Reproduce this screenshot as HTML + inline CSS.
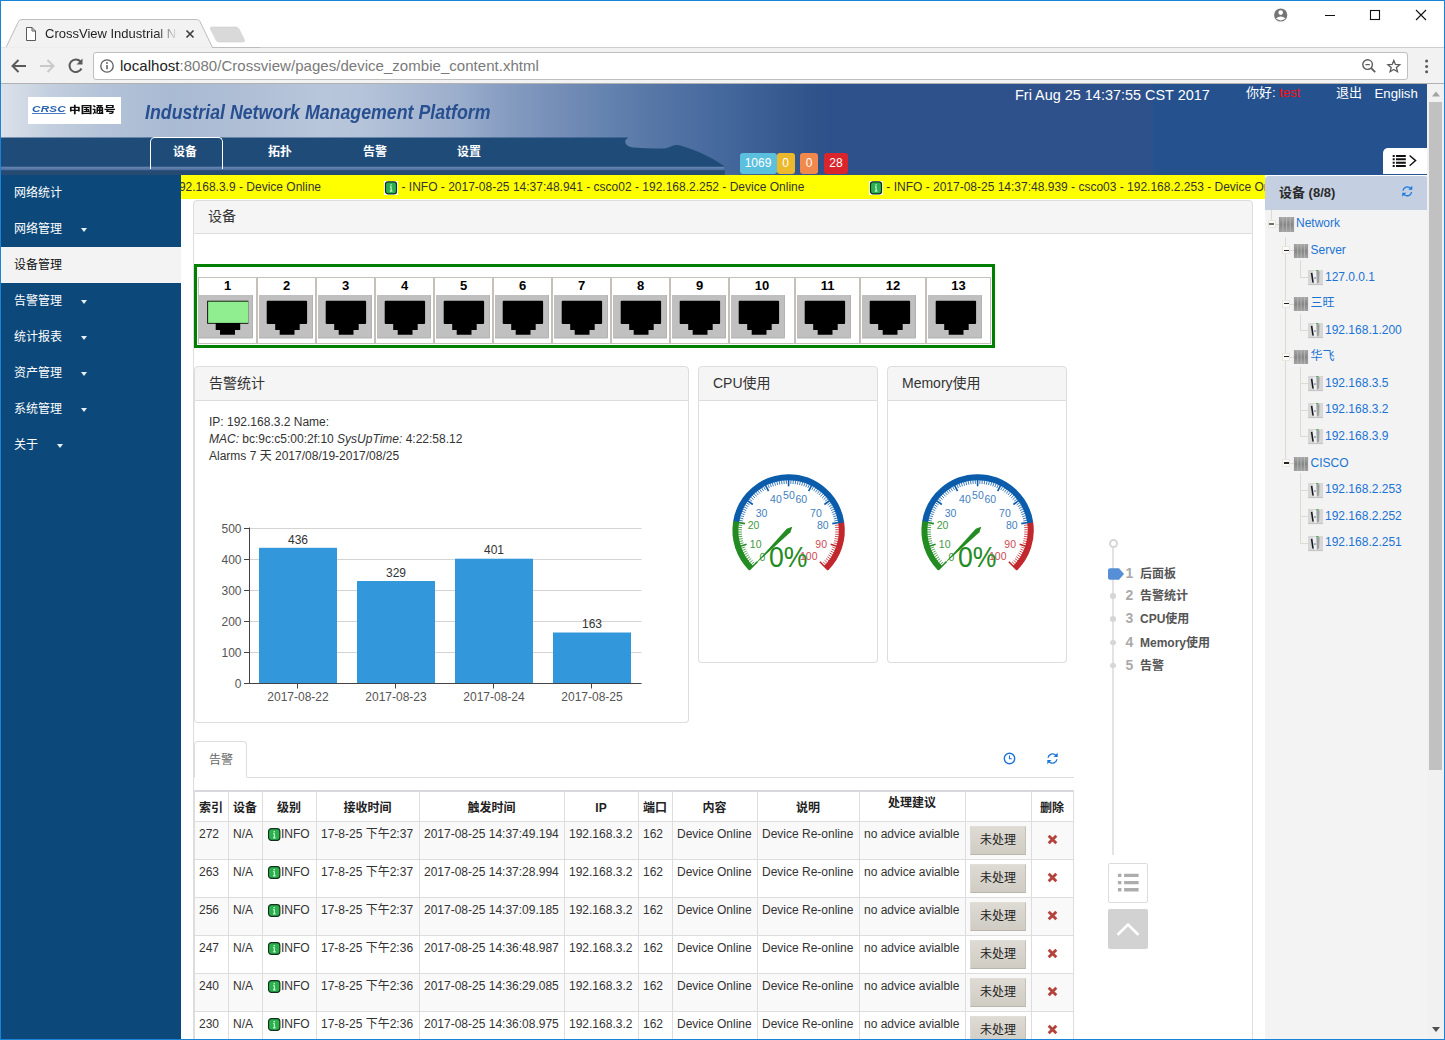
<!DOCTYPE html><html><head><meta charset="utf-8"><title>CrossView Industrial Network</title><style>
*{box-sizing:border-box;margin:0;padding:0}
html,body{width:1445px;height:1040px;overflow:hidden;background:#fff}
body{font-family:"Liberation Sans","Noto Sans CJK SC",sans-serif;font-size:12px;color:#333;position:relative}
.a{position:absolute}
.t{position:absolute;white-space:nowrap;line-height:1}
.cj{font-family:"Liberation Sans","Noto Sans CJK SC",sans-serif}
svg{position:absolute;overflow:visible}
#win{position:absolute;left:0;top:0;width:1445px;height:1040px;overflow:hidden}
.ph{position:absolute;background:#f5f5f5;border:1px solid #ddd;border-radius:4px 4px 0 0}
.pb{position:absolute;background:#fff;border:1px solid #ddd;border-top:none;border-radius:0 0 4px 4px}
.sb{position:absolute;left:1px;width:180px;height:36px;color:#fff;font-size:12px;line-height:36.6px;padding-left:13px;white-space:nowrap}
.car{position:absolute;width:0;height:0;border-left:3.5px solid transparent;border-right:3.5px solid transparent;border-top:4px solid #e8eef5}
.th{position:absolute;font-weight:bold;font-size:12px;text-align:center;white-space:nowrap;line-height:1;color:#222}
.td{position:absolute;font-size:12px;white-space:nowrap;line-height:1;color:#333}
.vl{position:absolute;width:1px;background:#ddd}
.hl{position:absolute;height:1px;background:#ddd}
.btn{position:absolute;width:56px;height:29px;background:linear-gradient(#dedbd4,#d0ccc4);border:1px solid;border-color:#e2dfd9 #c4c0b8 #bab6ae #dcd9d2;font-size:12px;line-height:26px;text-align:center;color:#222}
.tn{position:absolute;font-size:12px;color:#1a74d4;white-space:nowrap;line-height:1}
</style></head><body><div id="win">
<div class="a" style="left:0;top:0;width:1445px;height:47px;background:#fff"></div>
<div class="a" style="left:0;top:47px;width:1445px;height:37px;background:#f2f2f2;border-top:1px solid #cdcdcd;border-bottom:1px solid #b2b2b2"></div>
<svg style="left:0;top:0" width="260" height="48" viewBox="0 0 260 48"><path d="M1 47.5 L6 47.5 L18.5 21.5 Q19.5 19.5 22 19.5 L196.5 19.5 Q199 19.5 200 21.5 L212.5 47.5 L260 47.5" fill="#f2f2f2" stroke="#bdbdbd" stroke-width="1"/><path d="M1 48 L6.5 48 L212 48" stroke="#f2f2f2" stroke-width="1.4" fill="none"/><path d="M211.5 27 L236 27 Q238 27 239 29 L244.5 40 Q245 42 243 42 L219 42 Q217 42 216 40 L210.5 29 Q210 27 211.5 27Z" fill="#d9d9d9" stroke="#cfcfcf" stroke-width="0.6"/><path d="M26.5 27.5 L32 27.5 L35.5 31 L35.5 40.5 L26.5 40.5 Z M32 27.5 L32 31 L35.5 31" fill="#fff" stroke="#5a5a5a" stroke-width="1"/><path d="M186.5 30.5 L193.5 37.5 M193.5 30.5 L186.5 37.5" stroke="#3c3c3c" stroke-width="1.6" fill="none"/></svg>
<div class="t" style="left:45px;top:26.5px;font-size:13px;color:#1f1f1f;width:133px;overflow:hidden;-webkit-mask-image:linear-gradient(90deg,#000 84%,transparent 100%);mask-image:linear-gradient(90deg,#000 84%,transparent 100%)">CrossView Industrial Network</div>
<svg style="left:1260px;top:0" width="185" height="47" viewBox="0 0 185 47"><circle cx="20.7" cy="15" r="6.6" fill="#767676"/><circle cx="20.7" cy="12.6" r="2.3" fill="#fff"/><path d="M15.9 18.6 Q20.7 14.6 25.5 18.6 Q20.7 22.2 15.9 18.6Z" fill="#fff"/><path d="M65 15.5 H75" stroke="#111" stroke-width="1"/><rect x="110.5" y="10.5" width="9" height="9" fill="none" stroke="#111" stroke-width="1.1"/><path d="M156 10 L166 20 M166 10 L156 20" stroke="#111" stroke-width="1.1"/></svg>
<svg style="left:0;top:48px" width="130" height="36" viewBox="0 0 130 36"><path d="M26 18 H13 M18.5 12 L12.5 18 L18.5 24" fill="none" stroke="#5a5a5a" stroke-width="2"/><path d="M40 18 H53 M47.5 12 L53.5 18 L47.5 24" fill="none" stroke="#c9c9c9" stroke-width="2"/><path d="M80.5 13.5 A6.3 6.3 0 1 0 81.5 20.5" fill="none" stroke="#5a5a5a" stroke-width="2"/><path d="M76.5 16.5 H82.5 V10.5 Z" fill="#5a5a5a"/></svg>
<div class="a" style="left:93px;top:52px;width:1315px;height:28px;background:#fff;border:1px solid #bfbfbf;border-radius:3px"></div>
<svg style="left:100px;top:59px" width="14" height="14" viewBox="0 0 14 14"><circle cx="7" cy="7" r="6.2" fill="none" stroke="#5a5a5a" stroke-width="1.3"/><path d="M7 6 V10.2" stroke="#5a5a5a" stroke-width="1.5"/><circle cx="7" cy="4" r="0.9" fill="#5a5a5a"/></svg>
<div class="t" style="left:120px;top:58px;font-size:15px;color:#222;letter-spacing:0.035px">localhost<span style="color:#7a7a7a">:8080/Crossview/pages/device_zombie_content.xhtml</span></div>
<svg style="left:1360px;top:57px" width="60" height="18" viewBox="0 0 60 18"><circle cx="7.6" cy="7.6" r="4.8" fill="none" stroke="#5a5a5a" stroke-width="1.4"/><path d="M11.2 11.2 L15.2 15.2" stroke="#5a5a5a" stroke-width="1.8"/><path d="M5.4 7.6 H9.8" stroke="#5a5a5a" stroke-width="1.2"/><path d="M33.8 3.4 L35.4 7.4 L39.7 7.7 L36.4 10.5 L37.5 14.7 L33.8 12.4 L30.1 14.7 L31.2 10.5 L27.9 7.7 L32.2 7.4 Z" fill="none" stroke="#5a5a5a" stroke-width="1.3" stroke-linejoin="miter"/></svg>
<svg style="left:1423px;top:58px" width="8" height="18" viewBox="0 0 8 18"><circle cx="3.6" cy="2.9" r="1.5" fill="#5a5a5a"/><circle cx="3.6" cy="8.4" r="1.5" fill="#5a5a5a"/><circle cx="3.6" cy="13.8" r="1.5" fill="#5a5a5a"/></svg>
<div class="a" style="left:1px;top:84px;width:1443px;height:91px;background:linear-gradient(90deg,#dbe1ea 0px,#cfd8e4 25px,#c3cfde 50px,#b4c3d8 100px,#a9bad3 170px,#b0bfd6 250px,#b8c6db 320px,#b5c4d9 360px,#a6b6d1 420px,#9aadcb 460px,#889ec2 500px,#7790b8 550px,#6684b0 600px,#5777a7 650px,#4a6ca0 700px,#3e6298 750px,#35598f 790px,#30538c 810px,#2f518b 830px,#2f518b 1152px,#25528e 1152px,#25528e 1445px)"></div>
<svg style="left:0;top:137px" width="740" height="38" viewBox="0 0 740 38"><defs><linearGradient id="st" x1="0" y1="0" x2="0" y2="1"><stop offset="0" stop-color="#6a88b3"/><stop offset="1" stop-color="#47699a"/></linearGradient></defs><path d="M0 0.6 H628.3 Q624.6 3 625.4 5.8 Q627 10 633 10.6 Q650 12 665 11.4 Q670 10.4 674 8.3 Q677.5 7.6 682 9 Q700 14.6 712 21.6 Q720 26.2 724.5 29.5 V38 H0 Z" fill="#1e4b78"/><path d="M0 29.8 H724.5 V33.6 H0Z" fill="url(#st)"/><path d="M0 33.6 H724.5 V38 H0Z" fill="#264a72"/></svg>
<div class="a" style="left:28px;top:97px;width:93px;height:27px;background:#fff"></div>
<div class="t" style="left:32.3px;top:105px;font-size:8.3px;font-weight:bold;font-style:italic;color:#2a62b0;letter-spacing:0.2px;transform:scaleX(1.4);transform-origin:0 0;border-bottom:1px solid #4a7dc0;padding-bottom:0px;height:9px">CRSC</div>
<div class="t cj" style="left:68.8px;top:105.1px;font-size:11px;font-weight:900;color:#111;letter-spacing:0px;transform:scale(1.06,0.8);transform-origin:0 0;font-family:'Noto Sans CJK SC',sans-serif">中国通号</div>
<div class="t" style="left:145px;top:100.6px;font-size:21px;font-weight:bold;font-style:italic;color:#284f90;transform:scaleX(0.846);transform-origin:0 0">Industrial Network Management Platform</div>
<div class="a" style="left:150px;top:137px;width:73px;height:32px;border:1px solid #fff;border-bottom:none;border-radius:5px 5px 0 0"></div>
<div class="t cj" style="left:173px;top:146px;font-size:12px;font-weight:bold;color:#fff">设备</div>
<div class="t cj" style="left:268px;top:146px;font-size:12px;font-weight:bold;color:#fff">拓扑</div>
<div class="t cj" style="left:363px;top:146px;font-size:12px;font-weight:bold;color:#fff">告警</div>
<div class="t cj" style="left:457px;top:146px;font-size:12px;font-weight:bold;color:#fff">设置</div>
<div class="a" style="left:739.5px;top:153px;width:37px;height:21px;background:#5bc0de;border-radius:3px;color:#fff;font-size:12px;text-align:center;line-height:21px">1069</div>
<div class="a" style="left:776.5px;top:153px;width:18px;height:21px;background:#ecb92d;border-radius:3px;color:#fff;font-size:12px;text-align:center;line-height:21px">0</div>
<div class="a" style="left:800px;top:153px;width:18px;height:21px;background:#f0894b;border-radius:3px;color:#fff;font-size:12px;text-align:center;line-height:21px">0</div>
<div class="a" style="left:824px;top:153px;width:24px;height:21px;background:#d9262c;border-radius:3px;color:#fff;font-size:12px;text-align:center;line-height:21px">28</div>
<div class="t" style="left:1015px;top:87.5px;font-size:14.45px;color:#fff">Fri Aug 25 14:37:55 CST 2017</div>
<div class="t cj" style="left:1246px;top:85.5px;font-size:13px;color:#fff">你好: <span style="color:#ff0a0a">test</span></div>
<div class="t cj" style="left:1336px;top:85.5px;font-size:13px;color:#fff">退出</div>
<div class="t" style="left:1374.5px;top:86.6px;font-size:13.2px;color:#fff">English</div>
<div class="a" style="left:1383px;top:148px;width:45px;height:26px;background:#fff;border-radius:5px 0 0 0"></div>
<svg style="left:1392px;top:153px" width="28" height="16" viewBox="0 0 28 16"><path d="M0.7 3 H2.7 M0.7 6.3 H2.7 M0.7 9.7 H2.7 M0.7 13 H2.7" stroke="#111" stroke-width="2"/><path d="M4 3 H13.8 M4 6.3 H13.8 M4 9.7 H13.8 M4 13 H13.8" stroke="#111" stroke-width="2"/><path d="M17.6 2.5 L23.6 7.6 L17.6 12.7" fill="none" stroke="#111" stroke-width="1.4"/></svg>
<div class="a" style="left:1px;top:175px;width:180px;height:865px;background:#0c497a"></div>
<div class="sb cj" style="top:175px;">网络统计</div>
<div class="sb cj" style="top:211px;">网络管理</div>
<div class="car" style="left:81px;top:228px"></div>
<div class="sb cj" style="top:247px;background:#f3f3f3;color:#111;">设备管理</div>
<div class="sb cj" style="top:283px;">告警管理</div>
<div class="car" style="left:81px;top:300px"></div>
<div class="sb cj" style="top:319px;">统计报表</div>
<div class="car" style="left:81px;top:336px"></div>
<div class="sb cj" style="top:355px;">资产管理</div>
<div class="car" style="left:81px;top:372px"></div>
<div class="sb cj" style="top:391px;">系统管理</div>
<div class="car" style="left:81px;top:408px"></div>
<div class="sb cj" style="top:427px;">关于</div>
<div class="car" style="left:57px;top:444px"></div>
<div class="a" style="left:181px;top:175px;width:1084px;height:24px;background:#ffff00;overflow:hidden">
<div class="t" style="right:944px;top:6px;font-size:12px;color:#333">- INFO - 2017-08-25 14:37:48.944 - csco01 - 192.168.3.9 - Device Online</div>
<svg style="left:203px;top:6px" width="14" height="14" viewBox="0 0 14 14"><rect x="0" y="0" width="14" height="14" fill="#fff"/><rect x="1.5" y="0.9" width="11" height="12" rx="2.6" fill="#2bb050" stroke="#12301b" stroke-width="1.2"/><path d="M7.1 5.6 V10 M6 5.8 H7.1 M5.8 10.1 H8.5" stroke="#e9ffe6" stroke-width="1" fill="none"/><rect x="6.45" y="3.2" width="1.2" height="1.3" fill="#e9ffe6"/></svg>
<div class="t" style="left:220.5px;top:6px;font-size:12px;color:#333">- INFO - 2017-08-25 14:37:48.941 - csco02 - 192.168.2.252 - Device Online</div>
<svg style="left:688px;top:6px" width="14" height="14" viewBox="0 0 14 14"><rect x="0" y="0" width="14" height="14" fill="#fff"/><rect x="1.5" y="0.9" width="11" height="12" rx="2.6" fill="#2bb050" stroke="#12301b" stroke-width="1.2"/><path d="M7.1 5.6 V10 M6 5.8 H7.1 M5.8 10.1 H8.5" stroke="#e9ffe6" stroke-width="1" fill="none"/><rect x="6.45" y="3.2" width="1.2" height="1.3" fill="#e9ffe6"/></svg>
<div class="t" style="left:705.3px;top:6px;font-size:12px;color:#333">- INFO - 2017-08-25 14:37:48.939 - csco03 - 192.168.2.253 - Device Online</div>
</div>
<div class="ph" style="left:193px;top:200px;width:1060px;height:34px;border-radius:4px 4px 0 0"></div>
<div class="a" style="left:193px;top:234px;width:1060px;height:810px;border-left:1px solid #ddd;border-right:1px solid #ddd"></div>
<div class="t cj" style="left:208px;top:209px;font-size:14px;color:#333">设备</div>
<div class="a" style="left:194px;top:264px;width:801px;height:84px;border:3px solid #008000;background:#fff"></div>
<div class="a" style="left:198px;top:277px;width:59px;height:67px;border:1px solid #c5c0ba;background:#fff"></div>
<div class="t" style="left:198px;top:279.2px;width:59px;text-align:center;font-size:13px;font-weight:bold;color:#000">1</div>
<svg style="left:199px;top:295.2px" width="54" height="43.3" viewBox="0 0 54 43.3"><rect width="54" height="43.3" fill="#c0c0c0"/><path d="M53.5 0 V42.8 H0" fill="none" stroke="#b4b4b4" stroke-width="1"/><path d="M8.2 5.8 H49.4 V28.7 H41.2 V35 H36 V39.7 H21 V35 H16.7 V28.7 H8.2Z" fill="#000"/><rect x="9.1" y="6.6" width="40.3" height="21.3" fill="#90ee90"/></svg>
<div class="a" style="left:257px;top:277px;width:59px;height:67px;border:1px solid #c5c0ba;background:#fff"></div>
<div class="t" style="left:257px;top:279.2px;width:59px;text-align:center;font-size:13px;font-weight:bold;color:#000">2</div>
<svg style="left:259px;top:295.2px" width="54" height="43.3" viewBox="0 0 54 43.3"><rect width="54" height="43.3" fill="#c0c0c0"/><path d="M53.5 0 V42.8 H0" fill="none" stroke="#b4b4b4" stroke-width="1"/><path d="M8.7 5.8 H47.1 Q48.1 5.8 48.1 6.8 V27.9 Q48.1 28.9 47.1 28.9 H40.7 V35 H35.5 V39.7 H20.7 V35 H16.2 V28.9 H8.7 Q7.7 28.9 7.7 27.9 V6.8 Q7.7 5.8 8.7 5.8Z" fill="#000"/></svg>
<div class="a" style="left:316px;top:277px;width:59px;height:67px;border:1px solid #c5c0ba;background:#fff"></div>
<div class="t" style="left:316px;top:279.2px;width:59px;text-align:center;font-size:13px;font-weight:bold;color:#000">3</div>
<svg style="left:318px;top:295.2px" width="54" height="43.3" viewBox="0 0 54 43.3"><rect width="54" height="43.3" fill="#c0c0c0"/><path d="M53.5 0 V42.8 H0" fill="none" stroke="#b4b4b4" stroke-width="1"/><path d="M8.7 5.8 H47.1 Q48.1 5.8 48.1 6.8 V27.9 Q48.1 28.9 47.1 28.9 H40.7 V35 H35.5 V39.7 H20.7 V35 H16.2 V28.9 H8.7 Q7.7 28.9 7.7 27.9 V6.8 Q7.7 5.8 8.7 5.8Z" fill="#000"/></svg>
<div class="a" style="left:375px;top:277px;width:59px;height:67px;border:1px solid #c5c0ba;background:#fff"></div>
<div class="t" style="left:375px;top:279.2px;width:59px;text-align:center;font-size:13px;font-weight:bold;color:#000">4</div>
<svg style="left:377px;top:295.2px" width="54" height="43.3" viewBox="0 0 54 43.3"><rect width="54" height="43.3" fill="#c0c0c0"/><path d="M53.5 0 V42.8 H0" fill="none" stroke="#b4b4b4" stroke-width="1"/><path d="M8.7 5.8 H47.1 Q48.1 5.8 48.1 6.8 V27.9 Q48.1 28.9 47.1 28.9 H40.7 V35 H35.5 V39.7 H20.7 V35 H16.2 V28.9 H8.7 Q7.7 28.9 7.7 27.9 V6.8 Q7.7 5.8 8.7 5.8Z" fill="#000"/></svg>
<div class="a" style="left:434px;top:277px;width:59px;height:67px;border:1px solid #c5c0ba;background:#fff"></div>
<div class="t" style="left:434px;top:279.2px;width:59px;text-align:center;font-size:13px;font-weight:bold;color:#000">5</div>
<svg style="left:436px;top:295.2px" width="54" height="43.3" viewBox="0 0 54 43.3"><rect width="54" height="43.3" fill="#c0c0c0"/><path d="M53.5 0 V42.8 H0" fill="none" stroke="#b4b4b4" stroke-width="1"/><path d="M8.7 5.8 H47.1 Q48.1 5.8 48.1 6.8 V27.9 Q48.1 28.9 47.1 28.9 H40.7 V35 H35.5 V39.7 H20.7 V35 H16.2 V28.9 H8.7 Q7.7 28.9 7.7 27.9 V6.8 Q7.7 5.8 8.7 5.8Z" fill="#000"/></svg>
<div class="a" style="left:493px;top:277px;width:59px;height:67px;border:1px solid #c5c0ba;background:#fff"></div>
<div class="t" style="left:493px;top:279.2px;width:59px;text-align:center;font-size:13px;font-weight:bold;color:#000">6</div>
<svg style="left:495px;top:295.2px" width="54" height="43.3" viewBox="0 0 54 43.3"><rect width="54" height="43.3" fill="#c0c0c0"/><path d="M53.5 0 V42.8 H0" fill="none" stroke="#b4b4b4" stroke-width="1"/><path d="M8.7 5.8 H47.1 Q48.1 5.8 48.1 6.8 V27.9 Q48.1 28.9 47.1 28.9 H40.7 V35 H35.5 V39.7 H20.7 V35 H16.2 V28.9 H8.7 Q7.7 28.9 7.7 27.9 V6.8 Q7.7 5.8 8.7 5.8Z" fill="#000"/></svg>
<div class="a" style="left:552px;top:277px;width:59px;height:67px;border:1px solid #c5c0ba;background:#fff"></div>
<div class="t" style="left:552px;top:279.2px;width:59px;text-align:center;font-size:13px;font-weight:bold;color:#000">7</div>
<svg style="left:554px;top:295.2px" width="54" height="43.3" viewBox="0 0 54 43.3"><rect width="54" height="43.3" fill="#c0c0c0"/><path d="M53.5 0 V42.8 H0" fill="none" stroke="#b4b4b4" stroke-width="1"/><path d="M8.7 5.8 H47.1 Q48.1 5.8 48.1 6.8 V27.9 Q48.1 28.9 47.1 28.9 H40.7 V35 H35.5 V39.7 H20.7 V35 H16.2 V28.9 H8.7 Q7.7 28.9 7.7 27.9 V6.8 Q7.7 5.8 8.7 5.8Z" fill="#000"/></svg>
<div class="a" style="left:611px;top:277px;width:59px;height:67px;border:1px solid #c5c0ba;background:#fff"></div>
<div class="t" style="left:611px;top:279.2px;width:59px;text-align:center;font-size:13px;font-weight:bold;color:#000">8</div>
<svg style="left:613px;top:295.2px" width="54" height="43.3" viewBox="0 0 54 43.3"><rect width="54" height="43.3" fill="#c0c0c0"/><path d="M53.5 0 V42.8 H0" fill="none" stroke="#b4b4b4" stroke-width="1"/><path d="M8.7 5.8 H47.1 Q48.1 5.8 48.1 6.8 V27.9 Q48.1 28.9 47.1 28.9 H40.7 V35 H35.5 V39.7 H20.7 V35 H16.2 V28.9 H8.7 Q7.7 28.9 7.7 27.9 V6.8 Q7.7 5.8 8.7 5.8Z" fill="#000"/></svg>
<div class="a" style="left:670px;top:277px;width:59px;height:67px;border:1px solid #c5c0ba;background:#fff"></div>
<div class="t" style="left:670px;top:279.2px;width:59px;text-align:center;font-size:13px;font-weight:bold;color:#000">9</div>
<svg style="left:672px;top:295.2px" width="54" height="43.3" viewBox="0 0 54 43.3"><rect width="54" height="43.3" fill="#c0c0c0"/><path d="M53.5 0 V42.8 H0" fill="none" stroke="#b4b4b4" stroke-width="1"/><path d="M8.7 5.8 H47.1 Q48.1 5.8 48.1 6.8 V27.9 Q48.1 28.9 47.1 28.9 H40.7 V35 H35.5 V39.7 H20.7 V35 H16.2 V28.9 H8.7 Q7.7 28.9 7.7 27.9 V6.8 Q7.7 5.8 8.7 5.8Z" fill="#000"/></svg>
<div class="a" style="left:729px;top:277px;width:66px;height:67px;border:1px solid #c5c0ba;background:#fff"></div>
<div class="t" style="left:729px;top:279.2px;width:66px;text-align:center;font-size:13px;font-weight:bold;color:#000">10</div>
<svg style="left:731px;top:295.2px" width="54" height="43.3" viewBox="0 0 54 43.3"><rect width="54" height="43.3" fill="#c0c0c0"/><path d="M53.5 0 V42.8 H0" fill="none" stroke="#b4b4b4" stroke-width="1"/><path d="M8.7 5.8 H47.1 Q48.1 5.8 48.1 6.8 V27.9 Q48.1 28.9 47.1 28.9 H40.7 V35 H35.5 V39.7 H20.7 V35 H16.2 V28.9 H8.7 Q7.7 28.9 7.7 27.9 V6.8 Q7.7 5.8 8.7 5.8Z" fill="#000"/></svg>
<div class="a" style="left:795px;top:277px;width:65px;height:67px;border:1px solid #c5c0ba;background:#fff"></div>
<div class="t" style="left:795px;top:279.2px;width:65px;text-align:center;font-size:13px;font-weight:bold;color:#000">11</div>
<svg style="left:797px;top:295.2px" width="54" height="43.3" viewBox="0 0 54 43.3"><rect width="54" height="43.3" fill="#c0c0c0"/><path d="M53.5 0 V42.8 H0" fill="none" stroke="#b4b4b4" stroke-width="1"/><path d="M8.7 5.8 H47.1 Q48.1 5.8 48.1 6.8 V27.9 Q48.1 28.9 47.1 28.9 H40.7 V35 H35.5 V39.7 H20.7 V35 H16.2 V28.9 H8.7 Q7.7 28.9 7.7 27.9 V6.8 Q7.7 5.8 8.7 5.8Z" fill="#000"/></svg>
<div class="a" style="left:860px;top:277px;width:66px;height:67px;border:1px solid #c5c0ba;background:#fff"></div>
<div class="t" style="left:860px;top:279.2px;width:66px;text-align:center;font-size:13px;font-weight:bold;color:#000">12</div>
<svg style="left:862px;top:295.2px" width="54" height="43.3" viewBox="0 0 54 43.3"><rect width="54" height="43.3" fill="#c0c0c0"/><path d="M53.5 0 V42.8 H0" fill="none" stroke="#b4b4b4" stroke-width="1"/><path d="M8.7 5.8 H47.1 Q48.1 5.8 48.1 6.8 V27.9 Q48.1 28.9 47.1 28.9 H40.7 V35 H35.5 V39.7 H20.7 V35 H16.2 V28.9 H8.7 Q7.7 28.9 7.7 27.9 V6.8 Q7.7 5.8 8.7 5.8Z" fill="#000"/></svg>
<div class="a" style="left:926px;top:277px;width:65px;height:67px;border:1px solid #c5c0ba;background:#fff"></div>
<div class="t" style="left:926px;top:279.2px;width:65px;text-align:center;font-size:13px;font-weight:bold;color:#000">13</div>
<svg style="left:928px;top:295.2px" width="54" height="43.3" viewBox="0 0 54 43.3"><rect width="54" height="43.3" fill="#c0c0c0"/><path d="M53.5 0 V42.8 H0" fill="none" stroke="#b4b4b4" stroke-width="1"/><path d="M8.7 5.8 H47.1 Q48.1 5.8 48.1 6.8 V27.9 Q48.1 28.9 47.1 28.9 H40.7 V35 H35.5 V39.7 H20.7 V35 H16.2 V28.9 H8.7 Q7.7 28.9 7.7 27.9 V6.8 Q7.7 5.8 8.7 5.8Z" fill="#000"/></svg>
<div class="ph" style="left:194px;top:366px;width:495px;height:35px"></div>
<div class="pb" style="left:194px;top:401px;width:495px;height:322px"></div>
<div class="t cj" style="left:209px;top:376px;font-size:14px;color:#333">告警统计</div>
<div class="ph" style="left:698px;top:366px;width:180px;height:35px"></div>
<div class="pb" style="left:698px;top:401px;width:180px;height:262px"></div>
<div class="t cj" style="left:713px;top:376px;font-size:14px;color:#333">CPU使用</div>
<div class="ph" style="left:887px;top:366px;width:180px;height:35px"></div>
<div class="pb" style="left:887px;top:401px;width:180px;height:262px"></div>
<div class="t cj" style="left:902px;top:376px;font-size:14px;color:#333">Memory使用</div>
<div class="t" style="left:209px;top:416px;font-size:12px;color:#333">IP: 192.168.3.2 Name:</div>
<div class="t" style="left:209px;top:433px;font-size:12px;color:#333"><i>MAC:</i> bc:9c:c5:00:2f:10 <i>SysUpTime:</i> 4:22:58.12</div>
<div class="t cj" style="left:209px;top:450px;font-size:12px;color:#333">Alarms 7 天 2017/08/19-2017/08/25</div>
<svg style="left:0;top:0" width="700" height="730" viewBox="0 0 700 730" font-family="Liberation Sans, sans-serif" font-size="12"><path d="M249.5 652.5 H641.5" stroke="#d4d4d4" stroke-width="1"/><path d="M249.5 621.5 H641.5" stroke="#d4d4d4" stroke-width="1"/><path d="M249.5 590.5 H641.5" stroke="#d4d4d4" stroke-width="1"/><path d="M249.5 559.5 H641.5" stroke="#d4d4d4" stroke-width="1"/><path d="M249.5 528.5 H641.5" stroke="#d4d4d4" stroke-width="1"/><rect x="259" y="547.8" width="78" height="135.2" fill="#3398db"/><text x="298" y="543.5" text-anchor="middle" fill="#333">436</text><text x="298" y="700.5" text-anchor="middle" fill="#555">2017-08-22</text><path d="M297.5 683 V688.5" stroke="#444" stroke-width="1"/><rect x="357" y="581.0" width="78" height="102.0" fill="#3398db"/><text x="396" y="576.7" text-anchor="middle" fill="#333">329</text><text x="396" y="700.5" text-anchor="middle" fill="#555">2017-08-23</text><path d="M395.5 683 V688.5" stroke="#444" stroke-width="1"/><rect x="455" y="558.7" width="78" height="124.3" fill="#3398db"/><text x="494" y="554.4" text-anchor="middle" fill="#333">401</text><text x="494" y="700.5" text-anchor="middle" fill="#555">2017-08-24</text><path d="M493.5 683 V688.5" stroke="#444" stroke-width="1"/><rect x="553" y="632.5" width="78" height="50.5" fill="#3398db"/><text x="592" y="628.2" text-anchor="middle" fill="#333">163</text><text x="592" y="700.5" text-anchor="middle" fill="#555">2017-08-25</text><path d="M591.5 683 V688.5" stroke="#444" stroke-width="1"/><path d="M249.5 527.5 V683.5 M244 683.5 H641.5" stroke="#444" stroke-width="1" fill="none"/><path d="M244 683.5 H249.5" stroke="#444" stroke-width="1"/><text x="241.5" y="687.5" text-anchor="end" fill="#555">0</text><path d="M244 652.5 H249.5" stroke="#444" stroke-width="1"/><text x="241.5" y="656.5" text-anchor="end" fill="#555">100</text><path d="M244 621.5 H249.5" stroke="#444" stroke-width="1"/><text x="241.5" y="625.5" text-anchor="end" fill="#555">200</text><path d="M244 590.5 H249.5" stroke="#444" stroke-width="1"/><text x="241.5" y="594.5" text-anchor="end" fill="#555">300</text><path d="M244 559.5 H249.5" stroke="#444" stroke-width="1"/><text x="241.5" y="563.5" text-anchor="end" fill="#555">400</text><path d="M244 528.5 H249.5" stroke="#444" stroke-width="1"/><text x="241.5" y="532.5" text-anchor="end" fill="#555">500</text></svg>
<svg style="left:0;top:0" width="1100" height="700" viewBox="0 0 1100 700" font-family="Liberation Sans, sans-serif"><path d="M750.98 568.12 A53.20 53.20 0 0 1 736.05 522.18" fill="none" stroke="#228b22" stroke-width="6.0"/><path d="M736.05 522.18 A53.20 53.20 0 0 1 841.15 522.18" fill="none" stroke="#0b5cab" stroke-width="6.0"/><path d="M841.15 522.18 A53.20 53.20 0 0 1 826.22 568.12" fill="none" stroke="#c1272d" stroke-width="6.0"/><path d="M749.21 569.89 L757.35 561.75" stroke="#228b22" stroke-width="1.6"/><path d="M751.10 564.62 L754.06 561.93" stroke="#228b22" stroke-width="0.8"/><path d="M749.53 562.82 L752.62 560.27" stroke="#228b22" stroke-width="0.8"/><path d="M748.06 560.94 L751.25 558.54" stroke="#228b22" stroke-width="0.8"/><path d="M746.67 559.00 L749.98 556.75" stroke="#228b22" stroke-width="0.8"/><path d="M745.37 556.99 L748.78 554.90" stroke="#228b22" stroke-width="0.8"/><path d="M744.17 554.92 L747.68 553.00" stroke="#228b22" stroke-width="0.8"/><path d="M743.07 552.80 L746.66 551.05" stroke="#228b22" stroke-width="0.8"/><path d="M742.07 550.64 L745.74 549.05" stroke="#228b22" stroke-width="0.8"/><path d="M741.17 548.42 L744.91 547.01" stroke="#228b22" stroke-width="0.8"/><path d="M735.63 547.71 L746.56 544.16" stroke="#228b22" stroke-width="1.6"/><path d="M739.70 543.88 L743.56 542.82" stroke="#228b22" stroke-width="0.8"/><path d="M739.12 541.56 L743.02 540.69" stroke="#228b22" stroke-width="0.8"/><path d="M738.65 539.22 L742.60 538.53" stroke="#228b22" stroke-width="0.8"/><path d="M738.30 536.85 L742.27 536.35" stroke="#228b22" stroke-width="0.8"/><path d="M738.06 534.48 L742.04 534.16" stroke="#228b22" stroke-width="0.8"/><path d="M737.93 532.09 L741.92 531.97" stroke="#228b22" stroke-width="0.8"/><path d="M737.91 529.70 L741.91 529.77" stroke="#228b22" stroke-width="0.8"/><path d="M738.00 527.32 L741.99 527.57" stroke="#228b22" stroke-width="0.8"/><path d="M738.21 524.94 L742.18 525.38" stroke="#228b22" stroke-width="0.8"/><path d="M733.59 521.79 L744.94 523.59" stroke="#228b22" stroke-width="1.6"/><path d="M738.95 520.22 L742.87 521.03" stroke="#0b5cab" stroke-width="0.8"/><path d="M739.49 517.89 L743.37 518.89" stroke="#0b5cab" stroke-width="0.8"/><path d="M740.14 515.59 L743.96 516.77" stroke="#0b5cab" stroke-width="0.8"/><path d="M740.90 513.33 L744.66 514.68" stroke="#0b5cab" stroke-width="0.8"/><path d="M741.76 511.10 L745.45 512.63" stroke="#0b5cab" stroke-width="0.8"/><path d="M742.73 508.91 L746.34 510.62" stroke="#0b5cab" stroke-width="0.8"/><path d="M743.79 506.78 L747.33 508.65" stroke="#0b5cab" stroke-width="0.8"/><path d="M744.96 504.69 L748.40 506.73" stroke="#0b5cab" stroke-width="0.8"/><path d="M746.22 502.66 L749.57 504.86" stroke="#0b5cab" stroke-width="0.8"/><path d="M743.54 497.76 L752.84 504.52" stroke="#0b5cab" stroke-width="1.6"/><path d="M749.03 498.80 L752.15 501.30" stroke="#0b5cab" stroke-width="0.8"/><path d="M750.57 496.97 L753.57 499.62" stroke="#0b5cab" stroke-width="0.8"/><path d="M752.19 495.22 L755.06 498.00" stroke="#0b5cab" stroke-width="0.8"/><path d="M753.89 493.54 L756.63 496.46" stroke="#0b5cab" stroke-width="0.8"/><path d="M755.67 491.95 L758.27 494.99" stroke="#0b5cab" stroke-width="0.8"/><path d="M757.53 490.44 L759.98 493.60" stroke="#0b5cab" stroke-width="0.8"/><path d="M759.45 489.02 L761.75 492.29" stroke="#0b5cab" stroke-width="0.8"/><path d="M761.43 487.69 L763.58 491.07" stroke="#0b5cab" stroke-width="0.8"/><path d="M763.48 486.46 L765.46 489.93" stroke="#0b5cab" stroke-width="0.8"/><path d="M763.31 480.87 L768.53 491.12" stroke="#0b5cab" stroke-width="1.6"/><path d="M767.74 484.29 L769.38 487.94" stroke="#0b5cab" stroke-width="0.8"/><path d="M769.94 483.36 L771.41 487.08" stroke="#0b5cab" stroke-width="0.8"/><path d="M772.18 482.53 L773.47 486.32" stroke="#0b5cab" stroke-width="0.8"/><path d="M774.46 481.81 L775.57 485.65" stroke="#0b5cab" stroke-width="0.8"/><path d="M776.76 481.20 L777.70 485.09" stroke="#0b5cab" stroke-width="0.8"/><path d="M779.10 480.70 L779.85 484.63" stroke="#0b5cab" stroke-width="0.8"/><path d="M781.46 480.31 L782.02 484.27" stroke="#0b5cab" stroke-width="0.8"/><path d="M783.83 480.03 L784.21 484.01" stroke="#0b5cab" stroke-width="0.8"/><path d="M786.21 479.86 L786.40 483.85" stroke="#0b5cab" stroke-width="0.8"/><path d="M788.60 474.80 L788.60 486.30" stroke="#0b5cab" stroke-width="1.6"/><path d="M790.99 479.86 L790.80 483.85" stroke="#0b5cab" stroke-width="0.8"/><path d="M793.37 480.03 L792.99 484.01" stroke="#0b5cab" stroke-width="0.8"/><path d="M795.74 480.31 L795.18 484.27" stroke="#0b5cab" stroke-width="0.8"/><path d="M798.10 480.70 L797.35 484.63" stroke="#0b5cab" stroke-width="0.8"/><path d="M800.44 481.20 L799.50 485.09" stroke="#0b5cab" stroke-width="0.8"/><path d="M802.74 481.81 L801.63 485.65" stroke="#0b5cab" stroke-width="0.8"/><path d="M805.02 482.53 L803.73 486.32" stroke="#0b5cab" stroke-width="0.8"/><path d="M807.26 483.36 L805.79 487.08" stroke="#0b5cab" stroke-width="0.8"/><path d="M809.46 484.29 L807.82 487.94" stroke="#0b5cab" stroke-width="0.8"/><path d="M813.89 480.87 L808.67 491.12" stroke="#0b5cab" stroke-width="1.6"/><path d="M813.72 486.46 L811.74 489.93" stroke="#0b5cab" stroke-width="0.8"/><path d="M815.77 487.69 L813.62 491.07" stroke="#0b5cab" stroke-width="0.8"/><path d="M817.75 489.02 L815.45 492.29" stroke="#0b5cab" stroke-width="0.8"/><path d="M819.67 490.44 L817.22 493.60" stroke="#0b5cab" stroke-width="0.8"/><path d="M821.53 491.95 L818.93 494.99" stroke="#0b5cab" stroke-width="0.8"/><path d="M823.31 493.54 L820.57 496.46" stroke="#0b5cab" stroke-width="0.8"/><path d="M825.01 495.22 L822.14 498.00" stroke="#0b5cab" stroke-width="0.8"/><path d="M826.63 496.97 L823.63 499.62" stroke="#0b5cab" stroke-width="0.8"/><path d="M828.17 498.80 L825.05 501.30" stroke="#0b5cab" stroke-width="0.8"/><path d="M833.66 497.76 L824.36 504.52" stroke="#0b5cab" stroke-width="1.6"/><path d="M830.98 502.66 L827.63 504.86" stroke="#0b5cab" stroke-width="0.8"/><path d="M832.24 504.69 L828.80 506.73" stroke="#0b5cab" stroke-width="0.8"/><path d="M833.41 506.78 L829.87 508.65" stroke="#0b5cab" stroke-width="0.8"/><path d="M834.47 508.91 L830.86 510.62" stroke="#0b5cab" stroke-width="0.8"/><path d="M835.44 511.10 L831.75 512.63" stroke="#0b5cab" stroke-width="0.8"/><path d="M836.30 513.33 L832.54 514.68" stroke="#0b5cab" stroke-width="0.8"/><path d="M837.06 515.59 L833.24 516.77" stroke="#0b5cab" stroke-width="0.8"/><path d="M837.71 517.89 L833.83 518.89" stroke="#0b5cab" stroke-width="0.8"/><path d="M838.25 520.22 L834.33 521.03" stroke="#0b5cab" stroke-width="0.8"/><path d="M843.61 521.79 L832.26 523.59" stroke="#0b5cab" stroke-width="1.6"/><path d="M838.99 524.94 L835.02 525.38" stroke="#c1272d" stroke-width="0.8"/><path d="M839.20 527.32 L835.21 527.57" stroke="#c1272d" stroke-width="0.8"/><path d="M839.29 529.70 L835.29 529.77" stroke="#c1272d" stroke-width="0.8"/><path d="M839.27 532.09 L835.28 531.97" stroke="#c1272d" stroke-width="0.8"/><path d="M839.14 534.48 L835.16 534.16" stroke="#c1272d" stroke-width="0.8"/><path d="M838.90 536.85 L834.93 536.35" stroke="#c1272d" stroke-width="0.8"/><path d="M838.55 539.22 L834.60 538.53" stroke="#c1272d" stroke-width="0.8"/><path d="M838.08 541.56 L834.18 540.69" stroke="#c1272d" stroke-width="0.8"/><path d="M837.50 543.88 L833.64 542.82" stroke="#c1272d" stroke-width="0.8"/><path d="M841.57 547.71 L830.64 544.16" stroke="#c1272d" stroke-width="1.6"/><path d="M836.03 548.42 L832.29 547.01" stroke="#c1272d" stroke-width="0.8"/><path d="M835.13 550.64 L831.46 549.05" stroke="#c1272d" stroke-width="0.8"/><path d="M834.13 552.80 L830.54 551.05" stroke="#c1272d" stroke-width="0.8"/><path d="M833.03 554.92 L829.52 553.00" stroke="#c1272d" stroke-width="0.8"/><path d="M831.83 556.99 L828.42 554.90" stroke="#c1272d" stroke-width="0.8"/><path d="M830.53 559.00 L827.22 556.75" stroke="#c1272d" stroke-width="0.8"/><path d="M829.14 560.94 L825.95 558.54" stroke="#c1272d" stroke-width="0.8"/><path d="M827.67 562.82 L824.58 560.27" stroke="#c1272d" stroke-width="0.8"/><path d="M826.10 564.62 L823.14 561.93" stroke="#c1272d" stroke-width="0.8"/><path d="M827.99 569.89 L819.85 561.75" stroke="#c1272d" stroke-width="1.6"/><text x="762.40" y="560.50" text-anchor="middle" font-size="10.5" fill="#3f9a3f">0</text><text x="755.70" y="547.90" text-anchor="middle" font-size="10.5" fill="#3f9a3f">10</text><text x="753.60" y="529.00" text-anchor="middle" font-size="10.5" fill="#3f9a3f">20</text><text x="761.50" y="516.50" text-anchor="middle" font-size="10.5" fill="#3f7fbe">30</text><text x="775.90" y="503.10" text-anchor="middle" font-size="10.5" fill="#3f7fbe">40</text><text x="788.90" y="499.40" text-anchor="middle" font-size="10.5" fill="#3f7fbe">50</text><text x="801.30" y="503.10" text-anchor="middle" font-size="10.5" fill="#3f7fbe">60</text><text x="815.90" y="516.50" text-anchor="middle" font-size="10.5" fill="#3f7fbe">70</text><text x="822.80" y="529.00" text-anchor="middle" font-size="10.5" fill="#3f7fbe">80</text><text x="821.20" y="547.90" text-anchor="middle" font-size="10.5" fill="#cc4b50">90</text><text x="808.80" y="560.00" text-anchor="middle" font-size="10.5" fill="#cc4b50">100</text><path d="M792.28 526.82 L786.76 528.66 L753.24 565.86 L790.44 532.34 Z" fill="#228b22"/><text x="788.30" y="567.30" text-anchor="middle" font-size="29" fill="#228b22" textLength="38.5" lengthAdjust="spacingAndGlyphs">0%</text></svg>
<svg style="left:0;top:0" width="1100" height="700" viewBox="0 0 1100 700" font-family="Liberation Sans, sans-serif"><path d="M939.98 568.12 A53.20 53.20 0 0 1 925.05 522.18" fill="none" stroke="#228b22" stroke-width="6.0"/><path d="M925.05 522.18 A53.20 53.20 0 0 1 1030.15 522.18" fill="none" stroke="#0b5cab" stroke-width="6.0"/><path d="M1030.15 522.18 A53.20 53.20 0 0 1 1015.22 568.12" fill="none" stroke="#c1272d" stroke-width="6.0"/><path d="M938.21 569.89 L946.35 561.75" stroke="#228b22" stroke-width="1.6"/><path d="M940.10 564.62 L943.06 561.93" stroke="#228b22" stroke-width="0.8"/><path d="M938.53 562.82 L941.62 560.27" stroke="#228b22" stroke-width="0.8"/><path d="M937.06 560.94 L940.25 558.54" stroke="#228b22" stroke-width="0.8"/><path d="M935.67 559.00 L938.98 556.75" stroke="#228b22" stroke-width="0.8"/><path d="M934.37 556.99 L937.78 554.90" stroke="#228b22" stroke-width="0.8"/><path d="M933.17 554.92 L936.68 553.00" stroke="#228b22" stroke-width="0.8"/><path d="M932.07 552.80 L935.66 551.05" stroke="#228b22" stroke-width="0.8"/><path d="M931.07 550.64 L934.74 549.05" stroke="#228b22" stroke-width="0.8"/><path d="M930.17 548.42 L933.91 547.01" stroke="#228b22" stroke-width="0.8"/><path d="M924.63 547.71 L935.56 544.16" stroke="#228b22" stroke-width="1.6"/><path d="M928.70 543.88 L932.56 542.82" stroke="#228b22" stroke-width="0.8"/><path d="M928.12 541.56 L932.02 540.69" stroke="#228b22" stroke-width="0.8"/><path d="M927.65 539.22 L931.60 538.53" stroke="#228b22" stroke-width="0.8"/><path d="M927.30 536.85 L931.27 536.35" stroke="#228b22" stroke-width="0.8"/><path d="M927.06 534.48 L931.04 534.16" stroke="#228b22" stroke-width="0.8"/><path d="M926.93 532.09 L930.92 531.97" stroke="#228b22" stroke-width="0.8"/><path d="M926.91 529.70 L930.91 529.77" stroke="#228b22" stroke-width="0.8"/><path d="M927.00 527.32 L930.99 527.57" stroke="#228b22" stroke-width="0.8"/><path d="M927.21 524.94 L931.18 525.38" stroke="#228b22" stroke-width="0.8"/><path d="M922.59 521.79 L933.94 523.59" stroke="#228b22" stroke-width="1.6"/><path d="M927.95 520.22 L931.87 521.03" stroke="#0b5cab" stroke-width="0.8"/><path d="M928.49 517.89 L932.37 518.89" stroke="#0b5cab" stroke-width="0.8"/><path d="M929.14 515.59 L932.96 516.77" stroke="#0b5cab" stroke-width="0.8"/><path d="M929.90 513.33 L933.66 514.68" stroke="#0b5cab" stroke-width="0.8"/><path d="M930.76 511.10 L934.45 512.63" stroke="#0b5cab" stroke-width="0.8"/><path d="M931.73 508.91 L935.34 510.62" stroke="#0b5cab" stroke-width="0.8"/><path d="M932.79 506.78 L936.33 508.65" stroke="#0b5cab" stroke-width="0.8"/><path d="M933.96 504.69 L937.40 506.73" stroke="#0b5cab" stroke-width="0.8"/><path d="M935.22 502.66 L938.57 504.86" stroke="#0b5cab" stroke-width="0.8"/><path d="M932.54 497.76 L941.84 504.52" stroke="#0b5cab" stroke-width="1.6"/><path d="M938.03 498.80 L941.15 501.30" stroke="#0b5cab" stroke-width="0.8"/><path d="M939.57 496.97 L942.57 499.62" stroke="#0b5cab" stroke-width="0.8"/><path d="M941.19 495.22 L944.06 498.00" stroke="#0b5cab" stroke-width="0.8"/><path d="M942.89 493.54 L945.63 496.46" stroke="#0b5cab" stroke-width="0.8"/><path d="M944.67 491.95 L947.27 494.99" stroke="#0b5cab" stroke-width="0.8"/><path d="M946.53 490.44 L948.98 493.60" stroke="#0b5cab" stroke-width="0.8"/><path d="M948.45 489.02 L950.75 492.29" stroke="#0b5cab" stroke-width="0.8"/><path d="M950.43 487.69 L952.58 491.07" stroke="#0b5cab" stroke-width="0.8"/><path d="M952.48 486.46 L954.46 489.93" stroke="#0b5cab" stroke-width="0.8"/><path d="M952.31 480.87 L957.53 491.12" stroke="#0b5cab" stroke-width="1.6"/><path d="M956.74 484.29 L958.38 487.94" stroke="#0b5cab" stroke-width="0.8"/><path d="M958.94 483.36 L960.41 487.08" stroke="#0b5cab" stroke-width="0.8"/><path d="M961.18 482.53 L962.47 486.32" stroke="#0b5cab" stroke-width="0.8"/><path d="M963.46 481.81 L964.57 485.65" stroke="#0b5cab" stroke-width="0.8"/><path d="M965.76 481.20 L966.70 485.09" stroke="#0b5cab" stroke-width="0.8"/><path d="M968.10 480.70 L968.85 484.63" stroke="#0b5cab" stroke-width="0.8"/><path d="M970.46 480.31 L971.02 484.27" stroke="#0b5cab" stroke-width="0.8"/><path d="M972.83 480.03 L973.21 484.01" stroke="#0b5cab" stroke-width="0.8"/><path d="M975.21 479.86 L975.40 483.85" stroke="#0b5cab" stroke-width="0.8"/><path d="M977.60 474.80 L977.60 486.30" stroke="#0b5cab" stroke-width="1.6"/><path d="M979.99 479.86 L979.80 483.85" stroke="#0b5cab" stroke-width="0.8"/><path d="M982.37 480.03 L981.99 484.01" stroke="#0b5cab" stroke-width="0.8"/><path d="M984.74 480.31 L984.18 484.27" stroke="#0b5cab" stroke-width="0.8"/><path d="M987.10 480.70 L986.35 484.63" stroke="#0b5cab" stroke-width="0.8"/><path d="M989.44 481.20 L988.50 485.09" stroke="#0b5cab" stroke-width="0.8"/><path d="M991.74 481.81 L990.63 485.65" stroke="#0b5cab" stroke-width="0.8"/><path d="M994.02 482.53 L992.73 486.32" stroke="#0b5cab" stroke-width="0.8"/><path d="M996.26 483.36 L994.79 487.08" stroke="#0b5cab" stroke-width="0.8"/><path d="M998.46 484.29 L996.82 487.94" stroke="#0b5cab" stroke-width="0.8"/><path d="M1002.89 480.87 L997.67 491.12" stroke="#0b5cab" stroke-width="1.6"/><path d="M1002.72 486.46 L1000.74 489.93" stroke="#0b5cab" stroke-width="0.8"/><path d="M1004.77 487.69 L1002.62 491.07" stroke="#0b5cab" stroke-width="0.8"/><path d="M1006.75 489.02 L1004.45 492.29" stroke="#0b5cab" stroke-width="0.8"/><path d="M1008.67 490.44 L1006.22 493.60" stroke="#0b5cab" stroke-width="0.8"/><path d="M1010.53 491.95 L1007.93 494.99" stroke="#0b5cab" stroke-width="0.8"/><path d="M1012.31 493.54 L1009.57 496.46" stroke="#0b5cab" stroke-width="0.8"/><path d="M1014.01 495.22 L1011.14 498.00" stroke="#0b5cab" stroke-width="0.8"/><path d="M1015.63 496.97 L1012.63 499.62" stroke="#0b5cab" stroke-width="0.8"/><path d="M1017.17 498.80 L1014.05 501.30" stroke="#0b5cab" stroke-width="0.8"/><path d="M1022.66 497.76 L1013.36 504.52" stroke="#0b5cab" stroke-width="1.6"/><path d="M1019.98 502.66 L1016.63 504.86" stroke="#0b5cab" stroke-width="0.8"/><path d="M1021.24 504.69 L1017.80 506.73" stroke="#0b5cab" stroke-width="0.8"/><path d="M1022.41 506.78 L1018.87 508.65" stroke="#0b5cab" stroke-width="0.8"/><path d="M1023.47 508.91 L1019.86 510.62" stroke="#0b5cab" stroke-width="0.8"/><path d="M1024.44 511.10 L1020.75 512.63" stroke="#0b5cab" stroke-width="0.8"/><path d="M1025.30 513.33 L1021.54 514.68" stroke="#0b5cab" stroke-width="0.8"/><path d="M1026.06 515.59 L1022.24 516.77" stroke="#0b5cab" stroke-width="0.8"/><path d="M1026.71 517.89 L1022.83 518.89" stroke="#0b5cab" stroke-width="0.8"/><path d="M1027.25 520.22 L1023.33 521.03" stroke="#0b5cab" stroke-width="0.8"/><path d="M1032.61 521.79 L1021.26 523.59" stroke="#0b5cab" stroke-width="1.6"/><path d="M1027.99 524.94 L1024.02 525.38" stroke="#c1272d" stroke-width="0.8"/><path d="M1028.20 527.32 L1024.21 527.57" stroke="#c1272d" stroke-width="0.8"/><path d="M1028.29 529.70 L1024.29 529.77" stroke="#c1272d" stroke-width="0.8"/><path d="M1028.27 532.09 L1024.28 531.97" stroke="#c1272d" stroke-width="0.8"/><path d="M1028.14 534.48 L1024.16 534.16" stroke="#c1272d" stroke-width="0.8"/><path d="M1027.90 536.85 L1023.93 536.35" stroke="#c1272d" stroke-width="0.8"/><path d="M1027.55 539.22 L1023.60 538.53" stroke="#c1272d" stroke-width="0.8"/><path d="M1027.08 541.56 L1023.18 540.69" stroke="#c1272d" stroke-width="0.8"/><path d="M1026.50 543.88 L1022.64 542.82" stroke="#c1272d" stroke-width="0.8"/><path d="M1030.57 547.71 L1019.64 544.16" stroke="#c1272d" stroke-width="1.6"/><path d="M1025.03 548.42 L1021.29 547.01" stroke="#c1272d" stroke-width="0.8"/><path d="M1024.13 550.64 L1020.46 549.05" stroke="#c1272d" stroke-width="0.8"/><path d="M1023.13 552.80 L1019.54 551.05" stroke="#c1272d" stroke-width="0.8"/><path d="M1022.03 554.92 L1018.52 553.00" stroke="#c1272d" stroke-width="0.8"/><path d="M1020.83 556.99 L1017.42 554.90" stroke="#c1272d" stroke-width="0.8"/><path d="M1019.53 559.00 L1016.22 556.75" stroke="#c1272d" stroke-width="0.8"/><path d="M1018.14 560.94 L1014.95 558.54" stroke="#c1272d" stroke-width="0.8"/><path d="M1016.67 562.82 L1013.58 560.27" stroke="#c1272d" stroke-width="0.8"/><path d="M1015.10 564.62 L1012.14 561.93" stroke="#c1272d" stroke-width="0.8"/><path d="M1016.99 569.89 L1008.85 561.75" stroke="#c1272d" stroke-width="1.6"/><text x="951.40" y="560.50" text-anchor="middle" font-size="10.5" fill="#3f9a3f">0</text><text x="944.70" y="547.90" text-anchor="middle" font-size="10.5" fill="#3f9a3f">10</text><text x="942.60" y="529.00" text-anchor="middle" font-size="10.5" fill="#3f9a3f">20</text><text x="950.50" y="516.50" text-anchor="middle" font-size="10.5" fill="#3f7fbe">30</text><text x="964.90" y="503.10" text-anchor="middle" font-size="10.5" fill="#3f7fbe">40</text><text x="977.90" y="499.40" text-anchor="middle" font-size="10.5" fill="#3f7fbe">50</text><text x="990.30" y="503.10" text-anchor="middle" font-size="10.5" fill="#3f7fbe">60</text><text x="1004.90" y="516.50" text-anchor="middle" font-size="10.5" fill="#3f7fbe">70</text><text x="1011.80" y="529.00" text-anchor="middle" font-size="10.5" fill="#3f7fbe">80</text><text x="1010.20" y="547.90" text-anchor="middle" font-size="10.5" fill="#cc4b50">90</text><text x="997.80" y="560.00" text-anchor="middle" font-size="10.5" fill="#cc4b50">100</text><path d="M981.28 526.82 L975.76 528.66 L942.24 565.86 L979.44 532.34 Z" fill="#228b22"/><text x="977.30" y="567.30" text-anchor="middle" font-size="29" fill="#228b22" textLength="38.5" lengthAdjust="spacingAndGlyphs">0%</text></svg>
<div class="hl" style="left:194px;top:777px;width:880px"></div>
<div class="a" style="left:194px;top:741px;width:53px;height:37px;border:1px solid #ddd;border-bottom:1px solid #fff;border-radius:4px 4px 0 0;background:#fff"></div>
<div class="t cj" style="left:209px;top:753.7px;font-size:12px;color:#666">告警</div>
<svg style="left:1003px;top:752px" width="13" height="13" viewBox="0 0 13 13"><circle cx="6.5" cy="6.5" r="5.2" fill="none" stroke="#1a73d9" stroke-width="1.4"/><path d="M6.5 3.6 V6.8 H8.8" fill="none" stroke="#1a73d9" stroke-width="1.1"/></svg>
<svg style="left:1045.5px;top:752px" width="13" height="13" viewBox="0 0 14 14"><path d="M2.2 6.2 A4.9 4.9 0 0 1 10.6 3.6" fill="none" stroke="#1a73d9" stroke-width="1.5"/><path d="M12.6 0.9 V5.4 H8.1 Z" fill="#1a73d9"/><path d="M11.8 7.8 A4.9 4.9 0 0 1 3.4 10.4" fill="none" stroke="#1a73d9" stroke-width="1.5"/><path d="M1.4 13.1 V8.6 H5.9 Z" fill="#1a73d9"/></svg>
<div class="a" style="left:194px;top:821px;width:879px;height:38px;background:#f9f9f9"></div>
<div class="a" style="left:194px;top:897px;width:879px;height:38px;background:#f9f9f9"></div>
<div class="a" style="left:194px;top:973px;width:879px;height:38px;background:#f9f9f9"></div>
<div class="a" style="left:194px;top:790px;width:880px;height:1.5px;background:#d9d7de"></div>
<div class="hl" style="left:194px;top:821px;width:880px"></div>
<div class="hl" style="left:194px;top:859px;width:880px"></div>
<div class="hl" style="left:194px;top:897px;width:880px"></div>
<div class="hl" style="left:194px;top:935px;width:880px"></div>
<div class="hl" style="left:194px;top:973px;width:880px"></div>
<div class="hl" style="left:194px;top:1011px;width:880px"></div>
<div class="hl" style="left:194px;top:1049px;width:880px"></div>
<div class="vl" style="left:194px;top:790px;height:260px"></div>
<div class="vl" style="left:228px;top:790px;height:260px"></div>
<div class="vl" style="left:262px;top:790px;height:260px"></div>
<div class="vl" style="left:316px;top:790px;height:260px"></div>
<div class="vl" style="left:419px;top:790px;height:260px"></div>
<div class="vl" style="left:564px;top:790px;height:260px"></div>
<div class="vl" style="left:638px;top:790px;height:260px"></div>
<div class="vl" style="left:672px;top:790px;height:260px"></div>
<div class="vl" style="left:757px;top:790px;height:260px"></div>
<div class="vl" style="left:859px;top:790px;height:260px"></div>
<div class="vl" style="left:965px;top:790px;height:260px"></div>
<div class="vl" style="left:1031px;top:790px;height:260px"></div>
<div class="vl" style="left:1073px;top:790px;height:260px"></div>
<div class="th cj" style="left:194px;top:802px;width:34px">索引</div>
<div class="th cj" style="left:228px;top:802px;width:34px">设备</div>
<div class="th cj" style="left:262px;top:802px;width:54px">级别</div>
<div class="th cj" style="left:316px;top:802px;width:103px">接收时间</div>
<div class="th cj" style="left:419px;top:802px;width:145px">触发时间</div>
<div class="th cj" style="left:564px;top:802px;width:74px">IP</div>
<div class="th cj" style="left:638px;top:802px;width:34px">端口</div>
<div class="th cj" style="left:672px;top:802px;width:85px">内容</div>
<div class="th cj" style="left:757px;top:802px;width:102px">说明</div>
<div class="th cj" style="left:859px;top:797px;width:106px">处理建议</div>
<div class="th cj" style="left:1031px;top:802px;width:42px">删除</div>
<div class="td cj" style="left:199px;top:828px">272</div>
<div class="td cj" style="left:233px;top:828px">N/A</div>
<svg style="left:267.8px;top:828px" width="12.4" height="13" viewBox="0 0 12.4 13"><rect x="0" y="0" width="12.4" height="13" rx="3.4" fill="#fff" opacity="0.7"/><rect x="0.55" y="0.55" width="11.3" height="11.9" rx="2.9" fill="#2bb050" stroke="#12301b" stroke-width="1.15"/><path d="M6.3 5.4 V9.8 M5.2 5.6 H6.3 M5 9.9 H7.7" stroke="#e9ffe6" stroke-width="1" fill="none"/><rect x="5.65" y="3" width="1.2" height="1.3" fill="#e9ffe6"/></svg>
<div class="td" style="left:281px;top:828px">INFO</div>
<div class="td cj" style="left:321px;top:828px">17-8-25 下午2:37</div>
<div class="td cj" style="left:424px;top:828px">2017-08-25 14:37:49.194</div>
<div class="td cj" style="left:569px;top:828px">192.168.3.2</div>
<div class="td cj" style="left:643px;top:828px">162</div>
<div class="td cj" style="left:677px;top:828px">Device Online</div>
<div class="td cj" style="left:762px;top:828px">Device Re-online</div>
<div class="td cj" style="left:864px;top:828px">no advice avialble</div>
<div class="btn cj" style="left:970px;top:826px">未处理</div>
<svg style="left:1046.5px;top:834px" width="11" height="11" viewBox="0 0 11 11"><path d="M1.7 1.7 L9.3 9.3 M9.3 1.7 L1.7 9.3" stroke="#b4433b" stroke-width="2.9" stroke-linecap="butt"/></svg>
<div class="td cj" style="left:199px;top:866px">263</div>
<div class="td cj" style="left:233px;top:866px">N/A</div>
<svg style="left:267.8px;top:866px" width="12.4" height="13" viewBox="0 0 12.4 13"><rect x="0" y="0" width="12.4" height="13" rx="3.4" fill="#fff" opacity="0.7"/><rect x="0.55" y="0.55" width="11.3" height="11.9" rx="2.9" fill="#2bb050" stroke="#12301b" stroke-width="1.15"/><path d="M6.3 5.4 V9.8 M5.2 5.6 H6.3 M5 9.9 H7.7" stroke="#e9ffe6" stroke-width="1" fill="none"/><rect x="5.65" y="3" width="1.2" height="1.3" fill="#e9ffe6"/></svg>
<div class="td" style="left:281px;top:866px">INFO</div>
<div class="td cj" style="left:321px;top:866px">17-8-25 下午2:37</div>
<div class="td cj" style="left:424px;top:866px">2017-08-25 14:37:28.994</div>
<div class="td cj" style="left:569px;top:866px">192.168.3.2</div>
<div class="td cj" style="left:643px;top:866px">162</div>
<div class="td cj" style="left:677px;top:866px">Device Online</div>
<div class="td cj" style="left:762px;top:866px">Device Re-online</div>
<div class="td cj" style="left:864px;top:866px">no advice avialble</div>
<div class="btn cj" style="left:970px;top:864px">未处理</div>
<svg style="left:1046.5px;top:872px" width="11" height="11" viewBox="0 0 11 11"><path d="M1.7 1.7 L9.3 9.3 M9.3 1.7 L1.7 9.3" stroke="#b4433b" stroke-width="2.9" stroke-linecap="butt"/></svg>
<div class="td cj" style="left:199px;top:904px">256</div>
<div class="td cj" style="left:233px;top:904px">N/A</div>
<svg style="left:267.8px;top:904px" width="12.4" height="13" viewBox="0 0 12.4 13"><rect x="0" y="0" width="12.4" height="13" rx="3.4" fill="#fff" opacity="0.7"/><rect x="0.55" y="0.55" width="11.3" height="11.9" rx="2.9" fill="#2bb050" stroke="#12301b" stroke-width="1.15"/><path d="M6.3 5.4 V9.8 M5.2 5.6 H6.3 M5 9.9 H7.7" stroke="#e9ffe6" stroke-width="1" fill="none"/><rect x="5.65" y="3" width="1.2" height="1.3" fill="#e9ffe6"/></svg>
<div class="td" style="left:281px;top:904px">INFO</div>
<div class="td cj" style="left:321px;top:904px">17-8-25 下午2:37</div>
<div class="td cj" style="left:424px;top:904px">2017-08-25 14:37:09.185</div>
<div class="td cj" style="left:569px;top:904px">192.168.3.2</div>
<div class="td cj" style="left:643px;top:904px">162</div>
<div class="td cj" style="left:677px;top:904px">Device Online</div>
<div class="td cj" style="left:762px;top:904px">Device Re-online</div>
<div class="td cj" style="left:864px;top:904px">no advice avialble</div>
<div class="btn cj" style="left:970px;top:902px">未处理</div>
<svg style="left:1046.5px;top:910px" width="11" height="11" viewBox="0 0 11 11"><path d="M1.7 1.7 L9.3 9.3 M9.3 1.7 L1.7 9.3" stroke="#b4433b" stroke-width="2.9" stroke-linecap="butt"/></svg>
<div class="td cj" style="left:199px;top:942px">247</div>
<div class="td cj" style="left:233px;top:942px">N/A</div>
<svg style="left:267.8px;top:942px" width="12.4" height="13" viewBox="0 0 12.4 13"><rect x="0" y="0" width="12.4" height="13" rx="3.4" fill="#fff" opacity="0.7"/><rect x="0.55" y="0.55" width="11.3" height="11.9" rx="2.9" fill="#2bb050" stroke="#12301b" stroke-width="1.15"/><path d="M6.3 5.4 V9.8 M5.2 5.6 H6.3 M5 9.9 H7.7" stroke="#e9ffe6" stroke-width="1" fill="none"/><rect x="5.65" y="3" width="1.2" height="1.3" fill="#e9ffe6"/></svg>
<div class="td" style="left:281px;top:942px">INFO</div>
<div class="td cj" style="left:321px;top:942px">17-8-25 下午2:36</div>
<div class="td cj" style="left:424px;top:942px">2017-08-25 14:36:48.987</div>
<div class="td cj" style="left:569px;top:942px">192.168.3.2</div>
<div class="td cj" style="left:643px;top:942px">162</div>
<div class="td cj" style="left:677px;top:942px">Device Online</div>
<div class="td cj" style="left:762px;top:942px">Device Re-online</div>
<div class="td cj" style="left:864px;top:942px">no advice avialble</div>
<div class="btn cj" style="left:970px;top:940px">未处理</div>
<svg style="left:1046.5px;top:948px" width="11" height="11" viewBox="0 0 11 11"><path d="M1.7 1.7 L9.3 9.3 M9.3 1.7 L1.7 9.3" stroke="#b4433b" stroke-width="2.9" stroke-linecap="butt"/></svg>
<div class="td cj" style="left:199px;top:980px">240</div>
<div class="td cj" style="left:233px;top:980px">N/A</div>
<svg style="left:267.8px;top:980px" width="12.4" height="13" viewBox="0 0 12.4 13"><rect x="0" y="0" width="12.4" height="13" rx="3.4" fill="#fff" opacity="0.7"/><rect x="0.55" y="0.55" width="11.3" height="11.9" rx="2.9" fill="#2bb050" stroke="#12301b" stroke-width="1.15"/><path d="M6.3 5.4 V9.8 M5.2 5.6 H6.3 M5 9.9 H7.7" stroke="#e9ffe6" stroke-width="1" fill="none"/><rect x="5.65" y="3" width="1.2" height="1.3" fill="#e9ffe6"/></svg>
<div class="td" style="left:281px;top:980px">INFO</div>
<div class="td cj" style="left:321px;top:980px">17-8-25 下午2:36</div>
<div class="td cj" style="left:424px;top:980px">2017-08-25 14:36:29.085</div>
<div class="td cj" style="left:569px;top:980px">192.168.3.2</div>
<div class="td cj" style="left:643px;top:980px">162</div>
<div class="td cj" style="left:677px;top:980px">Device Online</div>
<div class="td cj" style="left:762px;top:980px">Device Re-online</div>
<div class="td cj" style="left:864px;top:980px">no advice avialble</div>
<div class="btn cj" style="left:970px;top:978px">未处理</div>
<svg style="left:1046.5px;top:986px" width="11" height="11" viewBox="0 0 11 11"><path d="M1.7 1.7 L9.3 9.3 M9.3 1.7 L1.7 9.3" stroke="#b4433b" stroke-width="2.9" stroke-linecap="butt"/></svg>
<div class="td cj" style="left:199px;top:1018px">230</div>
<div class="td cj" style="left:233px;top:1018px">N/A</div>
<svg style="left:267.8px;top:1018px" width="12.4" height="13" viewBox="0 0 12.4 13"><rect x="0" y="0" width="12.4" height="13" rx="3.4" fill="#fff" opacity="0.7"/><rect x="0.55" y="0.55" width="11.3" height="11.9" rx="2.9" fill="#2bb050" stroke="#12301b" stroke-width="1.15"/><path d="M6.3 5.4 V9.8 M5.2 5.6 H6.3 M5 9.9 H7.7" stroke="#e9ffe6" stroke-width="1" fill="none"/><rect x="5.65" y="3" width="1.2" height="1.3" fill="#e9ffe6"/></svg>
<div class="td" style="left:281px;top:1018px">INFO</div>
<div class="td cj" style="left:321px;top:1018px">17-8-25 下午2:36</div>
<div class="td cj" style="left:424px;top:1018px">2017-08-25 14:36:08.975</div>
<div class="td cj" style="left:569px;top:1018px">192.168.3.2</div>
<div class="td cj" style="left:643px;top:1018px">162</div>
<div class="td cj" style="left:677px;top:1018px">Device Online</div>
<div class="td cj" style="left:762px;top:1018px">Device Re-online</div>
<div class="td cj" style="left:864px;top:1018px">no advice avialble</div>
<div class="btn cj" style="left:970px;top:1016px">未处理</div>
<svg style="left:1046.5px;top:1024px" width="11" height="11" viewBox="0 0 11 11"><path d="M1.7 1.7 L9.3 9.3 M9.3 1.7 L1.7 9.3" stroke="#b4433b" stroke-width="2.9" stroke-linecap="butt"/></svg>
<div class="a" style="left:1112px;top:547px;width:2px;height:308px;background:#e3e3e3"></div>
<div class="a" style="left:1108.5px;top:538.5px;width:9.5px;height:9.5px;border:2px solid #d6d6d6;border-radius:50%;background:#fff"></div>
<svg style="left:1107.5px;top:568.2px" width="17" height="12" viewBox="0 0 17 12"><path d="M2 0.3 H11 L16 6 L11 11.7 H2 Q0 11.7 0 9.7 V2.3 Q0 0.3 2 0.3Z" fill="#568fd6"/></svg>
<div class="t" style="left:1125.5px;top:565.5px;font-size:14px;font-weight:bold;color:#aaa">1</div>
<div class="t cj" style="left:1140px;top:567.6px;font-size:12px;font-weight:bold;color:#555">后面板</div>
<div class="a" style="left:1110.3px;top:593.3px;width:5.4px;height:5.4px;border-radius:50%;background:#d6d6d6"></div>
<div class="t" style="left:1125.5px;top:588.3px;font-size:14px;font-weight:bold;color:#aaa">2</div>
<div class="t cj" style="left:1140px;top:590.4px;font-size:12px;font-weight:bold;color:#555">告警统计</div>
<div class="a" style="left:1110.3px;top:616.2px;width:5.4px;height:5.4px;border-radius:50%;background:#d6d6d6"></div>
<div class="t" style="left:1125.5px;top:611.2px;font-size:14px;font-weight:bold;color:#aaa">3</div>
<div class="t cj" style="left:1140px;top:613.3000000000001px;font-size:12px;font-weight:bold;color:#555">CPU使用</div>
<div class="a" style="left:1110.3px;top:639.8px;width:5.4px;height:5.4px;border-radius:50%;background:#d6d6d6"></div>
<div class="t" style="left:1125.5px;top:634.8px;font-size:14px;font-weight:bold;color:#aaa">4</div>
<div class="t cj" style="left:1140px;top:636.9px;font-size:12px;font-weight:bold;color:#555">Memory使用</div>
<div class="a" style="left:1110.3px;top:662.7px;width:5.4px;height:5.4px;border-radius:50%;background:#d6d6d6"></div>
<div class="t" style="left:1125.5px;top:657.7px;font-size:14px;font-weight:bold;color:#aaa">5</div>
<div class="t cj" style="left:1140px;top:659.8000000000001px;font-size:12px;font-weight:bold;color:#555">告警</div>
<div class="a" style="left:1108px;top:863px;width:40px;height:40px;border:1px solid #ddd;background:#fff;border-radius:2px"></div>
<svg style="left:1117px;top:873px" width="24" height="20" viewBox="0 0 24 20"><path d="M0.9 2.4 H4.4 M0.9 9.6 H4.4 M0.9 16.8 H4.4" stroke="#adadad" stroke-width="3.4"/><path d="M7.1 2.4 H21.6 M7.1 9.6 H21.6 M7.1 16.8 H21.6" stroke="#adadad" stroke-width="3.4"/></svg>
<div class="a" style="left:1108px;top:909px;width:40px;height:40px;background:#d2d2d2;border-radius:2px"></div>
<svg style="left:1116px;top:921px" width="24" height="16" viewBox="0 0 24 16"><path d="M1.6 13.8 L12 3.6 L22.4 13.8" fill="none" stroke="#fff" stroke-width="2.6"/></svg>
<div class="a" style="left:1265px;top:176px;width:163px;height:870px;background:#f3f3f3;border-radius:4px 4px 0 0"></div>
<div class="a" style="left:1265px;top:176px;width:163px;height:34px;background:#c4d0e2;border-radius:4px 4px 0 0"></div>
<div class="t cj" style="left:1279px;top:186px;font-size:13px;font-weight:bold;color:#2b2b2b">设备 (8/8)</div>
<svg style="left:1401.3px;top:185.4px" width="12.6" height="12.6" viewBox="0 0 14 14"><path d="M2.2 6.2 A4.9 4.9 0 0 1 10.6 3.6" fill="none" stroke="#1a78e0" stroke-width="1.5"/><path d="M12.6 0.9 V5.4 H8.1 Z" fill="#1a78e0"/><path d="M11.8 7.8 A4.9 4.9 0 0 1 3.4 10.4" fill="none" stroke="#1a78e0" stroke-width="1.5"/><path d="M1.4 13.1 V8.6 H5.9 Z" fill="#1a78e0"/></svg>
<div class="a" style="left:1271px;top:210px;width:1px;height:13.800000000000011px;background:#dddad1"></div>
<div class="a" style="left:1271px;top:224px;width:8px;height:1px;background:#dddad1"></div>
<div class="a" style="left:1285px;top:236.8px;width:1px;height:226.21999999999997px;background:#dddad1"></div>
<div class="a" style="left:1267.6px;top:219.8px;width:8px;height:8px;background:#fafaf8;border:1px solid #e8e5dc"></div><div class="a" style="left:1268.8999999999999px;top:223.0px;width:5.4px;height:1.6px;background:#6e6e6e"></div>
<svg style="left:1279px;top:216.8px" width="15" height="15" viewBox="0 0 15 15"><defs><linearGradient id="fg" x1="0" y1="0" x2="0" y2="1"><stop offset="0" stop-color="#a9a9a9"/><stop offset="0.5" stop-color="#868686"/><stop offset="1" stop-color="#a3a3a3"/></linearGradient></defs><rect width="15" height="15" fill="url(#fg)"/><path d="M4 0 V15 M7.6 0 V15 M11.2 0 V15" stroke="#b6bdb9" stroke-width="0.8"/><path d="M0.4 0 V15 M14.6 0 V15" stroke="#9c9c9c" stroke-width="0.8"/></svg>
<div class="tn" style="left:1296px;top:217.3px">Network</div>
<div class="a" style="left:1286px;top:250px;width:8px;height:1px;background:#dddad1"></div>
<div class="a" style="left:1282.2px;top:246.38px;width:8px;height:8px;background:#fafaf8;border:1px solid #e8e5dc"></div><div class="a" style="left:1283.5px;top:249.57999999999998px;width:5.4px;height:1.6px;background:#222"></div>
<svg style="left:1294px;top:243.88px" width="14" height="14" viewBox="0 0 15 15"><defs><linearGradient id="fg" x1="0" y1="0" x2="0" y2="1"><stop offset="0" stop-color="#a9a9a9"/><stop offset="0.5" stop-color="#868686"/><stop offset="1" stop-color="#a3a3a3"/></linearGradient></defs><rect width="15" height="15" fill="url(#fg)"/><path d="M4 0 V15 M7.6 0 V15 M11.2 0 V15" stroke="#b6bdb9" stroke-width="0.8"/><path d="M0.4 0 V15 M14.6 0 V15" stroke="#9c9c9c" stroke-width="0.8"/></svg>
<div class="tn cj" style="left:1310.5px;top:243.9px">Server</div>
<svg style="left:1308px;top:269.96000000000004px" width="15" height="15" viewBox="0 0 15 15"><rect x="0" y="0" width="15" height="15" fill="#d7d7d7"/><path d="M0 14.6 H15" stroke="#bcbcbc" stroke-width="0.8"/><path d="M4.6 1.6 L8.4 0.8 L8.9 14 L5.9 13.2 Z" fill="#eef0f4"/><path d="M8.4 0.8 L11.6 1.6 L11.1 12.2 L8.9 14 Z" fill="#9ea29e"/><path d="M2.8 3 L4.4 2.8 L5.8 12.8 L4.3 12.4 Z" fill="#15181c"/><rect x="6.2" y="7.3" width="1.6" height="1.5" fill="#7f8794"/><rect x="8.2" y="0" width="2.3" height="1.1" fill="#4cae4c"/></svg>
<div class="tn" style="left:1325px;top:270.5px">127.0.0.1</div>
<div class="a" style="left:1300px;top:277px;width:8px;height:1px;background:#dddad1"></div>
<div class="a" style="left:1286px;top:304px;width:8px;height:1px;background:#dddad1"></div>
<div class="a" style="left:1282.2px;top:299.54px;width:8px;height:8px;background:#fafaf8;border:1px solid #e8e5dc"></div><div class="a" style="left:1283.5px;top:302.74px;width:5.4px;height:1.6px;background:#222"></div>
<svg style="left:1294px;top:297.04px" width="14" height="14" viewBox="0 0 15 15"><defs><linearGradient id="fg" x1="0" y1="0" x2="0" y2="1"><stop offset="0" stop-color="#a9a9a9"/><stop offset="0.5" stop-color="#868686"/><stop offset="1" stop-color="#a3a3a3"/></linearGradient></defs><rect width="15" height="15" fill="url(#fg)"/><path d="M4 0 V15 M7.6 0 V15 M11.2 0 V15" stroke="#b6bdb9" stroke-width="0.8"/><path d="M0.4 0 V15 M14.6 0 V15" stroke="#9c9c9c" stroke-width="0.8"/></svg>
<div class="tn cj" style="left:1310.5px;top:297.0px">三旺</div>
<svg style="left:1308px;top:323.12px" width="15" height="15" viewBox="0 0 15 15"><rect x="0" y="0" width="15" height="15" fill="#d7d7d7"/><path d="M0 14.6 H15" stroke="#bcbcbc" stroke-width="0.8"/><path d="M4.6 1.6 L8.4 0.8 L8.9 14 L5.9 13.2 Z" fill="#eef0f4"/><path d="M8.4 0.8 L11.6 1.6 L11.1 12.2 L8.9 14 Z" fill="#9ea29e"/><path d="M2.8 3 L4.4 2.8 L5.8 12.8 L4.3 12.4 Z" fill="#15181c"/><rect x="6.2" y="7.3" width="1.6" height="1.5" fill="#7f8794"/><rect x="8.2" y="0" width="2.3" height="1.1" fill="#4cae4c"/></svg>
<div class="tn" style="left:1325px;top:323.6px">192.168.1.200</div>
<div class="a" style="left:1300px;top:330px;width:8px;height:1px;background:#dddad1"></div>
<div class="a" style="left:1286px;top:357px;width:8px;height:1px;background:#dddad1"></div>
<div class="a" style="left:1282.2px;top:352.7px;width:8px;height:8px;background:#fafaf8;border:1px solid #e8e5dc"></div><div class="a" style="left:1283.5px;top:355.9px;width:5.4px;height:1.6px;background:#222"></div>
<svg style="left:1294px;top:350.2px" width="14" height="14" viewBox="0 0 15 15"><defs><linearGradient id="fg" x1="0" y1="0" x2="0" y2="1"><stop offset="0" stop-color="#a9a9a9"/><stop offset="0.5" stop-color="#868686"/><stop offset="1" stop-color="#a3a3a3"/></linearGradient></defs><rect width="15" height="15" fill="url(#fg)"/><path d="M4 0 V15 M7.6 0 V15 M11.2 0 V15" stroke="#b6bdb9" stroke-width="0.8"/><path d="M0.4 0 V15 M14.6 0 V15" stroke="#9c9c9c" stroke-width="0.8"/></svg>
<div class="tn cj" style="left:1310.5px;top:350.2px">华飞</div>
<svg style="left:1308px;top:376.28px" width="15" height="15" viewBox="0 0 15 15"><rect x="0" y="0" width="15" height="15" fill="#d7d7d7"/><path d="M0 14.6 H15" stroke="#bcbcbc" stroke-width="0.8"/><path d="M4.6 1.6 L8.4 0.8 L8.9 14 L5.9 13.2 Z" fill="#eef0f4"/><path d="M8.4 0.8 L11.6 1.6 L11.1 12.2 L8.9 14 Z" fill="#9ea29e"/><path d="M2.8 3 L4.4 2.8 L5.8 12.8 L4.3 12.4 Z" fill="#15181c"/><rect x="6.2" y="7.3" width="1.6" height="1.5" fill="#7f8794"/><rect x="8.2" y="0" width="2.3" height="1.1" fill="#4cae4c"/></svg>
<div class="tn" style="left:1325px;top:376.8px">192.168.3.5</div>
<div class="a" style="left:1300px;top:383px;width:8px;height:1px;background:#dddad1"></div>
<svg style="left:1308px;top:402.86px" width="15" height="15" viewBox="0 0 15 15"><rect x="0" y="0" width="15" height="15" fill="#d7d7d7"/><path d="M0 14.6 H15" stroke="#bcbcbc" stroke-width="0.8"/><path d="M4.6 1.6 L8.4 0.8 L8.9 14 L5.9 13.2 Z" fill="#eef0f4"/><path d="M8.4 0.8 L11.6 1.6 L11.1 12.2 L8.9 14 Z" fill="#9ea29e"/><path d="M2.8 3 L4.4 2.8 L5.8 12.8 L4.3 12.4 Z" fill="#15181c"/><rect x="6.2" y="7.3" width="1.6" height="1.5" fill="#7f8794"/><rect x="8.2" y="0" width="2.3" height="1.1" fill="#4cae4c"/></svg>
<div class="tn" style="left:1325px;top:403.4px">192.168.3.2</div>
<div class="a" style="left:1300px;top:410px;width:8px;height:1px;background:#dddad1"></div>
<svg style="left:1308px;top:429.44px" width="15" height="15" viewBox="0 0 15 15"><rect x="0" y="0" width="15" height="15" fill="#d7d7d7"/><path d="M0 14.6 H15" stroke="#bcbcbc" stroke-width="0.8"/><path d="M4.6 1.6 L8.4 0.8 L8.9 14 L5.9 13.2 Z" fill="#eef0f4"/><path d="M8.4 0.8 L11.6 1.6 L11.1 12.2 L8.9 14 Z" fill="#9ea29e"/><path d="M2.8 3 L4.4 2.8 L5.8 12.8 L4.3 12.4 Z" fill="#15181c"/><rect x="6.2" y="7.3" width="1.6" height="1.5" fill="#7f8794"/><rect x="8.2" y="0" width="2.3" height="1.1" fill="#4cae4c"/></svg>
<div class="tn" style="left:1325px;top:429.9px">192.168.3.9</div>
<div class="a" style="left:1300px;top:436px;width:8px;height:1px;background:#dddad1"></div>
<div class="a" style="left:1286px;top:463px;width:8px;height:1px;background:#dddad1"></div>
<div class="a" style="left:1282.2px;top:459.02px;width:8px;height:8px;background:#fafaf8;border:1px solid #e8e5dc"></div><div class="a" style="left:1283.5px;top:462.21999999999997px;width:5.4px;height:1.6px;background:#222"></div>
<svg style="left:1294px;top:456.52px" width="14" height="14" viewBox="0 0 15 15"><defs><linearGradient id="fg" x1="0" y1="0" x2="0" y2="1"><stop offset="0" stop-color="#a9a9a9"/><stop offset="0.5" stop-color="#868686"/><stop offset="1" stop-color="#a3a3a3"/></linearGradient></defs><rect width="15" height="15" fill="url(#fg)"/><path d="M4 0 V15 M7.6 0 V15 M11.2 0 V15" stroke="#b6bdb9" stroke-width="0.8"/><path d="M0.4 0 V15 M14.6 0 V15" stroke="#9c9c9c" stroke-width="0.8"/></svg>
<div class="tn cj" style="left:1310.5px;top:456.5px">CISCO</div>
<svg style="left:1308px;top:482.59999999999997px" width="15" height="15" viewBox="0 0 15 15"><rect x="0" y="0" width="15" height="15" fill="#d7d7d7"/><path d="M0 14.6 H15" stroke="#bcbcbc" stroke-width="0.8"/><path d="M4.6 1.6 L8.4 0.8 L8.9 14 L5.9 13.2 Z" fill="#eef0f4"/><path d="M8.4 0.8 L11.6 1.6 L11.1 12.2 L8.9 14 Z" fill="#9ea29e"/><path d="M2.8 3 L4.4 2.8 L5.8 12.8 L4.3 12.4 Z" fill="#15181c"/><rect x="6.2" y="7.3" width="1.6" height="1.5" fill="#7f8794"/><rect x="8.2" y="0" width="2.3" height="1.1" fill="#4cae4c"/></svg>
<div class="tn" style="left:1325px;top:483.1px">192.168.2.253</div>
<div class="a" style="left:1300px;top:490px;width:8px;height:1px;background:#dddad1"></div>
<svg style="left:1308px;top:509.18000000000006px" width="15" height="15" viewBox="0 0 15 15"><rect x="0" y="0" width="15" height="15" fill="#d7d7d7"/><path d="M0 14.6 H15" stroke="#bcbcbc" stroke-width="0.8"/><path d="M4.6 1.6 L8.4 0.8 L8.9 14 L5.9 13.2 Z" fill="#eef0f4"/><path d="M8.4 0.8 L11.6 1.6 L11.1 12.2 L8.9 14 Z" fill="#9ea29e"/><path d="M2.8 3 L4.4 2.8 L5.8 12.8 L4.3 12.4 Z" fill="#15181c"/><rect x="6.2" y="7.3" width="1.6" height="1.5" fill="#7f8794"/><rect x="8.2" y="0" width="2.3" height="1.1" fill="#4cae4c"/></svg>
<div class="tn" style="left:1325px;top:509.7px">192.168.2.252</div>
<div class="a" style="left:1300px;top:516px;width:8px;height:1px;background:#dddad1"></div>
<svg style="left:1308px;top:535.76px" width="15" height="15" viewBox="0 0 15 15"><rect x="0" y="0" width="15" height="15" fill="#d7d7d7"/><path d="M0 14.6 H15" stroke="#bcbcbc" stroke-width="0.8"/><path d="M4.6 1.6 L8.4 0.8 L8.9 14 L5.9 13.2 Z" fill="#eef0f4"/><path d="M8.4 0.8 L11.6 1.6 L11.1 12.2 L8.9 14 Z" fill="#9ea29e"/><path d="M2.8 3 L4.4 2.8 L5.8 12.8 L4.3 12.4 Z" fill="#15181c"/><rect x="6.2" y="7.3" width="1.6" height="1.5" fill="#7f8794"/><rect x="8.2" y="0" width="2.3" height="1.1" fill="#4cae4c"/></svg>
<div class="tn" style="left:1325px;top:536.3px">192.168.2.251</div>
<div class="a" style="left:1300px;top:543px;width:8px;height:1px;background:#dddad1"></div>
<div class="a" style="left:1300px;top:260.38px;width:1px;height:16.58000000000004px;background:#dddad1"></div>
<div class="a" style="left:1300px;top:313.54px;width:1px;height:16.579999999999984px;background:#dddad1"></div>
<div class="a" style="left:1300px;top:366.7px;width:1px;height:69.74000000000001px;background:#dddad1"></div>
<div class="a" style="left:1300px;top:473.02px;width:1px;height:69.74000000000001px;background:#dddad1"></div>
<div class="a" style="left:1427px;top:84px;width:17px;height:956px;background:#f1f1f1"></div>
<div class="a" style="left:1429.2px;top:102px;width:12.8px;height:668px;background:#c1c1c1"></div>
<svg style="left:1428px;top:84px" width="16" height="956" viewBox="0 0 16 956"><path d="M4 12.5 L8 7.5 L12 12.5Z" fill="#a3a3a3"/><path d="M4 943 L8 948 L12 943Z" fill="#505050"/></svg>
<div class="a" style="left:0;top:0;width:1445px;height:1040px;border:1px solid #1883d7;pointer-events:none"></div>
</div></body></html>
